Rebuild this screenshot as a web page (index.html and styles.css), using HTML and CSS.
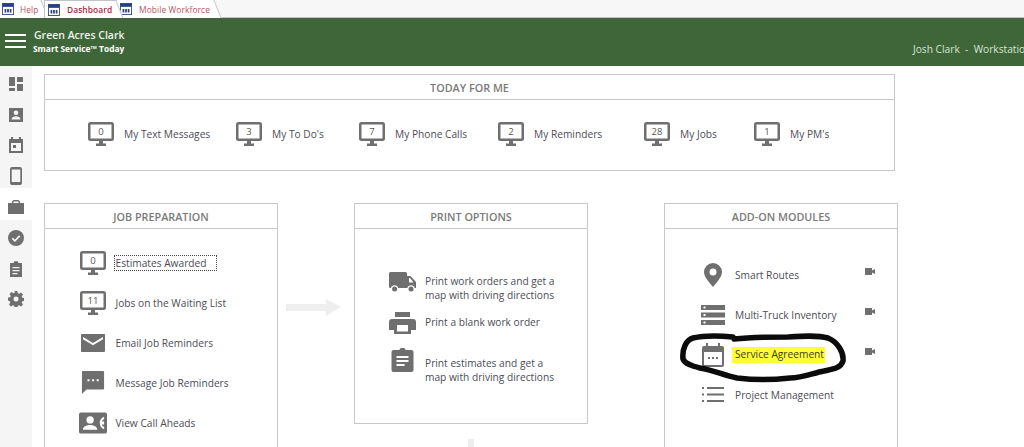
FILE: index.html
```html
<!DOCTYPE html>
<html lang="en">
<head>
<meta charset="utf-8">
<title>Dashboard</title>
<link rel="stylesheet" href="styles.css">
</head>
<body>
<svg class="defs" width="0" height="0" aria-hidden="true">
  <defs>
    <symbol id="form" viewBox="0 0 14 14"><rect x="0.5" y="0.5" width="13" height="13" fill="#fff" stroke="#27407f"/><rect x="0.5" y="0.5" width="13" height="4" fill="#27407f"/><path d="M3 7h2v4H3zM6 7h2v4H6zM9 7h2v4H9z" fill="#27407f"/></symbol>
    <symbol id="monitor" viewBox="0 0 26 24"><path fill-rule="evenodd" fill="#6f6f6f" d="M2.500 0h21A2.500 2.500 0 0 1 26 2.500v14a2.500 2.500 0 0 1-2.500 2.500H2.500A2.500 2.500 0 0 1 0 16.500v-14A2.500 2.500 0 0 1 2.500 0zM2.500 2.500v14h21v-14z"/><path fill="#6f6f6f" d="M11 19h4v2.500h3V24H8v-2.500h3z"/></symbol>
  </defs>
</svg>
<nav class="tabs">
  <div class="tab tab-help"><svg class="tab-icon"><use href="#form"/></svg><span>Help</span></div>
  <div class="tab tab-active"><svg class="tab-icon"><use href="#form"/></svg><span>Dashboard</span></div>
  <div class="tab tab-mobile"><svg class="tab-icon"><use href="#form"/></svg><span>Mobile Workforce</span></div>
</nav>
<header class="banner">
  <div class="burger"><i></i><i></i><i></i></div>
  <div class="brand">
    <div class="brand-name">Green Acres Clark</div>
    <div class="brand-sub">Smart Service™ Today</div>
  </div>
  <div class="user">Josh Clark &nbsp;-&nbsp; Workstation</div>
</header>
<div class="body">
  <aside class="side">
    <div class="side-item"><svg viewBox="0 0 16 16" width="16" height="16"><path fill="#6f6f6f" d="M1 1h6v9H1zM9 1h6v5H9zM9 8h6v7H9zM1 12h6v3H1z"/></svg></div>
    <div class="side-item"><svg viewBox="0 0 16 16" width="16" height="16"><path fill="#6f6f6f" fill-rule="evenodd" d="M1 1h14v14H1zM8 3.500a2.300 2.300 0 1 0 0 4.600a2.300 2.300 0 0 0 0-4.600zM3.500 12.500h9c0-2-2.500-3.200-4.500-3.200s-4.500 1.200-4.500 3.200z"/></svg></div>
    <div class="side-item"><svg viewBox="0 0 16 16" width="16" height="16"><path fill="#6f6f6f" fill-rule="evenodd" d="M3 0h2v2h6V0h2v2h2v14H1V2h2zM3 6v8h10V6zM5 8h3v3H5z"/></svg></div>
    <div class="side-item"><svg viewBox="0 0 16 18" width="16" height="18"><path fill="#6f6f6f" fill-rule="evenodd" d="M4 0h8a2 2 0 0 1 2 2v14a2 2 0 0 1-2 2H4a2 2 0 0 1-2-2V2a2 2 0 0 1 2-2zM3.700 2.500v12.500h8.600V2.500z"/></svg></div>
    <div class="side-item side-on"><svg viewBox="0 0 16 16" width="16" height="16"><path fill="#6f6f6f" d="M5.500 1h5L12 2.500V4h4v11H0V4h4V2.500zM5.500 2.500V4h5V2.500z"/></svg></div>
    <div class="side-item"><svg viewBox="0 0 16 16" width="16" height="16"><circle cx="8" cy="8" r="8" fill="#6f6f6f"/><path d="M4.300 8.300l2.600 2.500 4.800-5" fill="none" stroke="#f5f5f5" stroke-width="1.700"/></svg></div>
    <div class="side-item"><svg viewBox="0 0 16 16" width="16" height="16"><path fill="#6f6f6f" fill-rule="evenodd" d="M2 2h3.500a2.500 2 0 0 1 5 0H14v14H2zM4.500 6v1.300h7V6zM4.500 9v1.300h7V9zM4.500 12v1.300h5V12z"/></svg></div>
    <div class="side-item"><svg viewBox="0 0 16 16" width="16" height="16"><path fill="#6f6f6f" fill-rule="evenodd" d="M6.600 0h2.800l.4 2.200 1.300.6 1.900-1.300 2 2-1.300 1.900.6 1.300 2.200.4v2.800l-2.200.4-.6 1.300 1.300 1.900-2 2-1.900-1.300-1.300.6-.4 2.200H6.600l-.4-2.200-1.300-.6-1.900 1.300-2-2 1.300-1.900-.6-1.300L0 9.400V6.600l2.200-.4.600-1.300-1.300-1.900 2-2 1.900 1.300 1.300-.6zM8 5.500a2.500 2.500 0 1 0 0 5a2.500 2.500 0 0 0 0-5z"/></svg></div>
  </aside>
  <main class="main">
    <section class="card card-today">
      <h2 class="card-title">TODAY FOR ME</h2>
      <div class="today-row">
        <div class="stat s1"><div class="mon"><svg><use href="#monitor"/></svg><b>0</b></div><span>My Text Messages</span></div>
        <div class="stat s2"><div class="mon"><svg><use href="#monitor"/></svg><b>3</b></div><span>My To Do's</span></div>
        <div class="stat s3"><div class="mon"><svg><use href="#monitor"/></svg><b>7</b></div><span>My Phone Calls</span></div>
        <div class="stat s4"><div class="mon"><svg><use href="#monitor"/></svg><b>2</b></div><span>My Reminders</span></div>
        <div class="stat s5"><div class="mon"><svg><use href="#monitor"/></svg><b>28</b></div><span>My Jobs</span></div>
        <div class="stat s6"><div class="mon"><svg><use href="#monitor"/></svg><b>1</b></div><span>My PM's</span></div>
      </div>
    </section>
    <div class="columns">
      <section class="card card-job">
        <h2 class="card-title">JOB PREPARATION</h2>
        <div class="list list-job">
          <div class="row"><div class="mon"><svg><use href="#monitor"/></svg><b>0</b></div><span class="focus">Estimates Awarded</span></div>
          <div class="row"><div class="mon"><svg><use href="#monitor"/></svg><b>11</b></div><span>Jobs on the Waiting List</span></div>
          <div class="row"><svg class="ico" viewBox="0 0 26 20"><path fill="#6f6f6f" fill-rule="evenodd" d="M1.500 1h23A1 1 0 0 1 25 2v16a1 1 0 0 1-1 1H2a1 1 0 0 1-1-1V2zM3 4v2.200l10 6 10-6V4l-10 6z"/></svg><span>Email Job Reminders</span></div>
          <div class="row"><svg class="ico" viewBox="0 0 26 26"><path fill="#6f6f6f" fill-rule="evenodd" d="M2 0h22a1 1 0 0 1 1 1v18a1 1 0 0 1-1 1H6l-5 5V1a1 1 0 0 1 1-1zM7 9v2.200h2.200V9zM12 9v2.200h2.200V9zM17 9v2.200h2.200V9z"/></svg><span>Message Job Reminders</span></div>
          <div class="row"><svg class="ico ico-wide" viewBox="0 0 29 22"><path fill="#6f6f6f" fill-rule="evenodd" d="M2 0h25a2 2 0 0 1 2 2v18a2 2 0 0 1-2 2H2a2 2 0 0 1-2-2V2a2 2 0 0 1 2-2zM11.500 4a3.800 3.800 0 1 0 0 7.600a3.800 3.800 0 0 0 0-7.600zM4 18h15c0-3.500-4-5-7.500-5S4 14.500 4 18zM26 4.500c-3 1-4.500 3.500-4.500 6.500s1.500 5.500 4.500 6.500v-2.500c-1-.3-2-1-2.200-2.500h2.200V9.500h-2.200c.2-1.500 1.200-2.200 2.200-2.500z"/></svg><span>View Call Aheads</span></div>
        </div>
      </section>
      <div class="gutter">
        <svg class="arrow-right" viewBox="0 0 55 18"><path fill="#eeeeee" d="M0 5h40V0l15 8-15 9v-5H0z"/></svg>
      </div>
      <div class="print-col">
        <section class="card card-print">
          <h2 class="card-title">PRINT OPTIONS</h2>
          <div class="list list-print">
            <div class="prow p1"><svg class="pico" viewBox="0 0 27 20"><path fill="#6f6f6f" fill-rule="evenodd" d="M1.500 0h15A1.500 1.500 0 0 1 18 1.500V4h3.500L27 10v6h-1.300a3.800 3.800 0 0 0-7.300 0H9.200a3.800 3.800 0 0 0-7.300 0H1.500A1.500 1.500 0 0 1 0 14.500v-13A1.500 1.500 0 0 1 1.500 0zM20 6v4.500h4.500L21 6z"/><circle cx="5.600" cy="17" r="2.500" fill="#6f6f6f"/><circle cx="22" cy="17" r="2.500" fill="#6f6f6f"/></svg><span>Print work orders and get a<br>map with driving directions</span></div>
            <div class="prow p2"><svg class="pico" viewBox="0 0 27 22"><path fill="#6f6f6f" fill-rule="evenodd" d="M6 0h15v5H6zM3 7h21a3 3 0 0 1 3 3v8h-5v4H5v-4H0v-8a3 3 0 0 1 3-3zM8 13v6.500h11V13z"/></svg><span>Print a blank work order</span></div>
            <div class="prow p3"><svg class="pico pico-clip" viewBox="0 0 22 24"><path fill="#6f6f6f" fill-rule="evenodd" d="M2 2h6a3 2.200 0 0 1 6 0h6a2 2 0 0 1 2 2v18a2 2 0 0 1-2 2H2a2 2 0 0 1-2-2V4a2 2 0 0 1 2-2zM5 8v2h12V8zM5 12v2h12v-2zM5 16v2h8v-2z"/></svg><span>Print estimates and get a<br>map with driving directions</span></div>
          </div>
        </section>
        <svg class="arrow-down" viewBox="0 0 6 10"><path fill="#eeeeee" d="M0 0h6v10H0z"/></svg>
      </div>
      <div class="gutter"></div>
      <section class="card card-addon">
        <h2 class="card-title">ADD-ON MODULES</h2>
        <div class="list list-addon">
          <div class="arow">
            <span class="aico"><svg width="18" height="24" viewBox="0 0 18 24"><path fill="#6f6f6f" fill-rule="evenodd" d="M9 0a9 9 0 0 1 9 9c0 5.500-6 11-9 15C6 20 0 14.500 0 9a9 9 0 0 1 9-9zM9 5.500a3.500 3.500 0 1 0 0 7a3.500 3.500 0 0 0 0-7z"/></svg></span>
            <span class="alabel">Smart Routes</span>
            <svg class="cam" viewBox="0 0 10 7"><path fill="#6f6f6f" d="M0 0h7v7H0zM7 2.500l3-1.500v5L7 4.500z"/></svg>
          </div>
          <div class="arow">
            <span class="aico"><svg width="24" height="20" viewBox="0 0 24 20"><path fill="#6f6f6f" fill-rule="evenodd" d="M0 0h24v5H0zM0 7.500h24v5H0zM0 15h24v5H0zM2.500 1.500v2h2v-2zM2.500 9v2h2V9zM2.500 16.500v2h2v-2z"/></svg></span>
            <span class="alabel">Multi-Truck Inventory</span>
            <svg class="cam" viewBox="0 0 10 7"><path fill="#6f6f6f" d="M0 0h7v7H0zM7 2.500l3-1.500v5L7 4.500z"/></svg>
          </div>
          <div class="arow">
            <span class="aico"><svg width="22" height="24" viewBox="0 0 22 24"><path fill="#6f6f6f" fill-rule="evenodd" d="M4 0h2v3h10V0h2v3h2a2 2 0 0 1 2 2v17a2 2 0 0 1-2 2H2a2 2 0 0 1-2-2V5a2 2 0 0 1 2-2h2zM2 9v13h18V9zM6 14h2v2H6zM10 14h2v2h-2zM14 14h2v2h-2z"/></svg></span>
            <span class="alabel mark">Service Agreement</span>
            <svg class="cam" viewBox="0 0 10 7"><path fill="#6f6f6f" d="M0 0h7v7H0zM7 2.500l3-1.500v5L7 4.500z"/></svg>
          </div>
          <div class="arow">
            <span class="aico"><svg width="22" height="15" viewBox="0 0 22 15"><path fill="#6f6f6f" d="M0 0h2v2H0zM5 0h17v2H5zM0 6.500h2v2H0zM5 6.500h17v2H5zM0 13h2v2H0zM5 13h17v2H5z"/></svg></span>
            <span class="alabel">Project Management</span>
          </div>
        </div>
      </section>
    </div>
  </main>
</div>
<svg class="scribble" viewBox="0 0 170 50" aria-hidden="true"><path d="M5 26C4 16 8 7 15 5C28 2 45 3 55 4L56 6C75 4 95 4 110 4C125 3 140 2 150 5C160 9 166 20 165 28C163 35 155 36 146 38C135 40 125 45 112 45C95 47 75 47 59 45C45 42 35 37 22 35C14 33 7 31 5 26Z" fill="none" stroke="#0b0b0b" stroke-width="5.500" stroke-linejoin="round"/></svg>
</body>
</html>
```
FILE: styles.css
```css
* { box-sizing: border-box; }
html, body { margin: 0; height: 447px; overflow: hidden; }
body { position: relative; width: 1024px; background: #fff; font-family: "Open Sans", "Liberation Sans", sans-serif; font-size: 10.2px; color: #4c4c56; }
.defs { position: absolute; }

.tabs { display: flex; height: 18px; background: #f7f7f7; border-bottom: 1px solid #c4c4c4; }
.tab { position: relative; display: flex; align-items: center; gap: 6px; height: 18px; color: #b5535e; font-size: 8.400px; letter-spacing: 0.1px; background: #fff; }
.tab::after { content: ""; position: absolute; top: 0; bottom: 0; right: -3px; width: 8px; background: #fff; border-right: 1px solid #c4c4c4; transform: skewX(22deg); }
.tab > * { position: relative; z-index: 1; }
.tab-help { width: 42px; padding-left: 2px; z-index: 1; }
.tab-active { width: 73px; padding-left: 3px; gap: 7px; color: #a52e3c; font-weight: 600; border-left: 1px solid #c4c4c4; border-top: 1px solid #c4c4c4; height: 18px; z-index: 3; margin-left: 2px; }
.tab-mobile { width: 98px; padding-left: 3px; gap: 7px; z-index: 2; }
.tab-icon { width: 12px; height: 12px; flex: none; }

.banner { display: flex; height: 48px; background: #3f6639; color: #fff; position: relative; }
.burger { display: flex; flex-direction: column; gap: 4px; margin: 16px 0 0 5px; width: 21px; }
.burger i { display: block; height: 2px; background: #fff; }
.brand { margin: 10px 0 0 8px; }
.brand-name { font-size: 10.500px; font-weight: 600; line-height: 15px; color: #eef3ec; }
.brand-sub { font-size: 8.400px; font-weight: 700; line-height: 12px; margin-left: -1px; }
.user { position: absolute; left: 913px; top: 24px; white-space: nowrap; font-size: 10.200px; color: #d9e4d6; }

.body { display: flex; height: 381px; }
.side { width: 32px; flex: none; background: #f5f5f5; display: flex; flex-direction: column; padding-top: 2.700px; }
.side-item { height: 30.670px; display: flex; align-items: center; justify-content: center; flex: none; }
.side-on { background: #fff; height: 32px; padding-top: 6px; margin: -3.300px 0 2.700px; }

.main { flex: 1; padding: 8px 0 0 12px; min-width: 0; }
.card { border: 1px solid #c8c8c8; background: #fff; }
.card-title { margin: 0; height: 25px; line-height: 26px; border-bottom: 1px solid #c8c8c8; text-align: center; font-size: 10.800px; font-weight: 600; color: #7a7a7a; }
.card-today { width: 851px; height: 97px; }
.today-row { position: relative; height: 70px; }
.stat { position: absolute; top: 22px; display: flex; align-items: center; gap: 10px; white-space: nowrap; }
.s1 { left: 43px; } .s2 { left: 191px; } .s3 { left: 314px; } .s4 { left: 453px; } .s5 { left: 599px; } .s6 { left: 709px; }

.mon { position: relative; width: 26px; height: 24px; flex: none; }
.mon svg { width: 100%; height: 100%; display: block; }
.mon b { position: absolute; left: 0; right: 0; top: 1.500px; text-align: center; font-weight: 400; font-size: 9.500px; line-height: 15px; color: #555; }

.columns { display: flex; margin-top: 32px; align-items: flex-start; }
.card-job, .card-print, .card-addon { width: 234px; }
.card-job, .card-addon { height: 260px; }
.card-print { height: 221px; }
.gutter { width: 76px; flex: none; padding: 96px 0 0 8px; }
.arrow-right { width: 55px; height: 18px; display: block; }
.print-col { display: flex; flex-direction: column; align-items: center; width: 234px; flex: none; }
.arrow-down { width: 6px; height: 10px; margin-top: 15px; }

.list-job { display: flex; flex-direction: column; gap: 16px; padding: 22px 0 0 35px; }
.row { display: flex; align-items: center; gap: 9.500px; height: 24px; white-space: nowrap; }
.ico { width: 26px; height: 24px; flex: none; }
.ico-wide { width: 28px; margin-left: -1px; margin-right: -1px; }
.focus { border: 1px dotted #444; padding: 0 9px 0 1px; margin-left: -2px; line-height: 14px; }

.list-print { position: relative; height: 195px; }
.prow { position: absolute; left: 34px; display: flex; gap: 9px; line-height: 13.500px; white-space: nowrap; }
.p1 { top: 46px; } .p2 { top: 87px; } .p3 { top: 128px; }
.pico { width: 27px; height: 22px; flex: none; margin-top: -4px; }
.pico-clip { margin-top: -9px; height: 24px; }

.list-addon { display: flex; flex-direction: column; gap: 15px; padding: 33px 0 0 35px; }
.arow { display: flex; align-items: center; height: 25px; white-space: nowrap; position: relative; }
.aico { width: 35px; flex: none; display: flex; justify-content: center; margin-left: -5px; }
.alabel { margin-left: 5px; }
.mark { background: #ffff33; color: #3c3c20; padding: 0 1px 1px 3px; margin-left: 2px; line-height: 15px; }
.cam { position: absolute; left: 165px; top: 6px; width: 10px; height: 7px; }

.scribble { position: absolute; left: 678px; top: 333px; width: 170px; height: 50px; }
```
